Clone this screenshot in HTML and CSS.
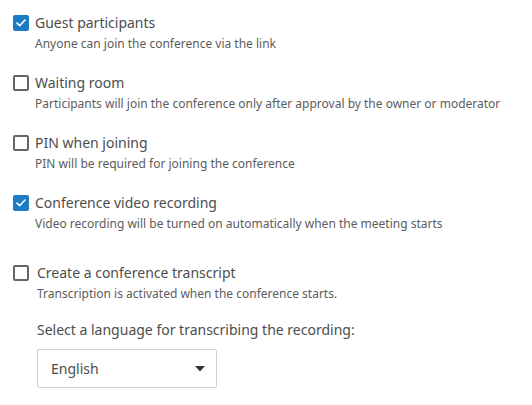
FILE: index.html
```
<!DOCTYPE html>
<html>
<head>
<meta charset="utf-8">
<link rel="stylesheet" href="styles.css">
</head>
<body>
<div class="settings">
  <div class="option">
    <span class="box checked"><svg viewBox="0 0 16 16" width="16" height="16"><path d="M4 8.1 L6.7 10.7 L12 5" fill="none" stroke="#fff" stroke-width="1.6" stroke-linecap="round" stroke-linejoin="round"/></svg></span>
    <div class="text">
      <div class="title">Guest participants</div>
      <div class="desc">Anyone can join the conference via the link</div>
    </div>
  </div>
  <div class="option">
    <span class="box"></span>
    <div class="text">
      <div class="title">Waiting room</div>
      <div class="desc">Participants will join the conference only after approval by the owner or moderator</div>
    </div>
  </div>
  <div class="option">
    <span class="box"></span>
    <div class="text">
      <div class="title">PIN when joining</div>
      <div class="desc">PIN will be required for joining the conference</div>
    </div>
  </div>
  <div class="option">
    <span class="box checked"><svg viewBox="0 0 16 16" width="16" height="16"><path d="M4 8.1 L6.7 10.7 L12 5" fill="none" stroke="#fff" stroke-width="1.6" stroke-linecap="round" stroke-linejoin="round"/></svg></span>
    <div class="text">
      <div class="title">Conference video recording</div>
      <div class="desc">Video recording will be turned on automatically when the meeting starts</div>
    </div>
  </div>
  <div class="option transcript">
    <span class="box"></span>
    <div class="text">
      <div class="title">Create a conference transcript</div>
      <div class="desc">Transcription is activated when the conference starts.</div>
      <div class="lang-label">Select a language for transcribing the recording:</div>
      <div class="select">
        <span>English</span>
        <svg width="10" height="6" viewBox="0 0 10 6"><path d="M0 0 H10 L5 5.5 Z" fill="#333"/></svg>
      </div>
    </div>
  </div>
</div>
</body>
</html>
```
FILE: styles.css
```
html, body {
  margin: 0;
  padding: 0;
  background: #fff;
}
body {
  font-family: "Noto Sans", "Open Sans", sans-serif;
}
.settings {
  display: flex;
  flex-direction: column;
  gap: 20px;
  padding: 13px 0 0 13px;
}
.option {
  display: flex;
  align-items: flex-start;
  gap: 6px;
}
.box {
  flex: none;
  width: 16px;
  height: 16px;
  margin-top: 2px;
  box-sizing: border-box;
  border: 2px solid #666;
  border-radius: 2px;
  display: flex;
}
.box.checked {
  border: none;
  background: #1b7bc4;
}
.title {
  font-size: 14px;
  line-height: 20px;
  color: #4d4d4d;
}
.desc {
  font-size: 12px;
  line-height: 18px;
  margin-top: 2px;
  color: #5c5c5c;
}
.transcript {
  margin-top: 10px;
  gap: 8px;
}
.lang-label {
  font-size: 14px;
  line-height: 20px;
  color: #4d4d4d;
  margin-top: 17px;
}
.select {
  margin-top: 9px;
  width: 180px;
  height: 39px;
  box-sizing: border-box;
  border: 1px solid #d0d0d0;
  border-radius: 2px;
  display: flex;
  align-items: center;
  justify-content: space-between;
  padding: 0 11px 0 13px;
  font-size: 14px;
  color: #4d4d4d;
}
```
